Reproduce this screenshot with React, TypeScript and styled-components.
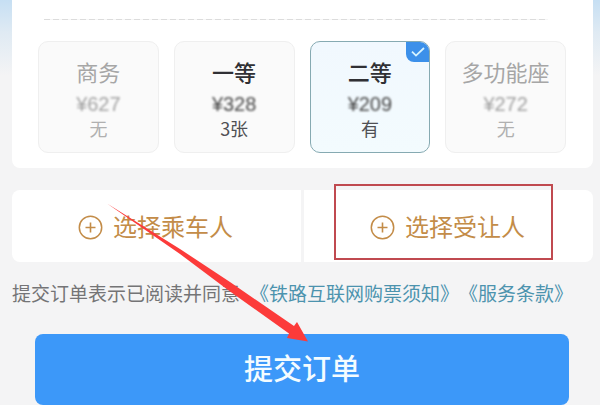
import React, { useState } from "react";
import styled, { createGlobalStyle } from "styled-components";

const GlobalStyle = createGlobalStyle`
  *, *::before, *::after { box-sizing: border-box; }
  body {
    margin: 0;
    background: #f4f4f5;
    font-family: "Noto Sans CJK SC", sans-serif;
  }
  button { font-family: inherit; cursor: pointer; }
  button:disabled { cursor: default; }
`;

const Page = styled.main`
  position: relative;
  overflow: hidden;
  padding: 0 7px 0 12px;
  background: linear-gradient(180deg, #c6dff3 0, #dfeaf3 32px, #f4f4f5 76px);
`;

const SeatCard = styled.section`
  padding: 19px 27px 15px 26px;
  background: #fff;
  border-radius: 0 0 8px 8px;
`;

const Divider = styled.hr`
  height: 1px;
  margin: 0 18px 21px 6px;
  border: 0;
  background: repeating-linear-gradient(90deg, #dcdcdc 0 6px, #f6f6f6 6px 9px);
`;

const SeatGrid = styled.div`
  display: grid;
  grid-template-columns: repeat(4, 1fr);
  gap: 15px;
`;

const Seat = styled.button<{ $selected: boolean }>`
  position: relative;
  display: flex;
  flex-direction: column;
  align-items: center;
  height: 112px;
  padding: 12px 0 0;
  overflow: hidden;
  color: #303034;
  background: ${(p) =>
    p.$selected ? "linear-gradient(180deg, #f1f8fe, #f3fbfe)" : "#fafafa"};
  border: ${(p) => (p.$selected ? "1px solid #86aab2" : "1px solid #efefef")};
  border-radius: 10px;

  &:disabled { color: #a6a6a6; }
`;

const SeatName = styled.span`
  font-size: 22px;
  font-weight: 500;
  line-height: 34px;

  ${Seat}:disabled & { font-weight: 400; }
`;

const Price = styled.span`
  margin-top: 4px;
  font-family: "Liberation Sans", sans-serif;
  font-size: 20px;
  line-height: 24px;
  color: #484848;
  filter: blur(1px);

  ${Seat}:disabled & { color: #a2a2a2; }
`;

const Stock = styled.span`
  font-size: 18px;
  line-height: 24px;
  color: #505054;

  ${Seat}:disabled & { color: #b0b0b0; }
`;

const Tick = styled.span`
  position: absolute;
  top: -1px;
  right: -1px;
  display: flex;
  align-items: center;
  justify-content: center;
  width: 24px;
  height: 21px;
  background: #3c90ea;
  border-radius: 0 10px 0 8px;
`;

const PeopleRow = styled.section`
  display: grid;
  grid-template-columns: 1fr 1fr;
  gap: 3px;
  margin-top: 22px;
`;

const PersonCell = styled.div`
  position: relative;
  background: #fff;

  &:first-child { border-radius: 8px 0 0 8px; }
  &:last-child { border-radius: 0 8px 8px 0; }
`;

const PersonButton = styled.button`
  display: flex;
  align-items: center;
  justify-content: center;
  gap: 10px;
  width: 100%;
  height: 72px;
  padding: 2px 2px 0 0;
  font-size: 24px;
  line-height: 32px;
  color: #c38c48;
  background: transparent;
  border: 0;
`;

const PersonLabel = styled.span`
  padding-bottom: 3px;
`;

const Highlight = styled.div`
  position: absolute;
  inset: -6px 40px 2px 30px;
  border: 2px solid #c04a50;
  pointer-events: none;
`;

const Agreement = styled.p`
  display: flex;
  margin: 17px 0 0;
  font-size: 19px;
  line-height: 28px;
  white-space: nowrap;
  color: #747476;
`;

const Links = styled.span`
  display: flex;
  margin-left: 10px;
`;

const TermsLink = styled.a`
  color: #4c93ae;
  text-decoration: none;
`;

const Submit = styled.button`
  display: block;
  width: calc(100% - 47px);
  height: 71px;
  margin: 27px 24px 0 23px;
  padding: 0 0 6px;
  font-size: 29px;
  font-weight: 500;
  color: #f4fcff;
  background: #3c98f9;
  border: 0;
  border-radius: 8px;
`;

const Arrow = styled.svg`
  position: absolute;
  left: 106px;
  top: 203px;
  pointer-events: none;
`;

const seats = [
  { name: "商务", price: "¥627", stock: "无", soldOut: true },
  { name: "一等", price: "¥328", stock: "3张", soldOut: false },
  { name: "二等", price: "¥209", stock: "有", soldOut: false },
  { name: "多功能座", price: "¥272", stock: "无", soldOut: true },
];

const PlusCircle = () => (
  <svg width="25" height="25" viewBox="0 0 25 25" fill="none" stroke="currentColor" aria-hidden="true">
    <circle cx="12.5" cy="12.5" r="11.2" strokeWidth="1.5" />
    <path d="M12.5 7.5v10M7.5 12.5h10" strokeWidth="1.6" />
  </svg>
);

export default function App() {
  const [selected, setSelected] = useState("二等");

  return (
    <>
      <GlobalStyle />
      <Page>
        <SeatCard>
          <Divider />
          <SeatGrid>
            {seats.map((seat) => (
              <Seat
                key={seat.name}
                type="button"
                disabled={seat.soldOut}
                aria-pressed={selected === seat.name}
                $selected={selected === seat.name}
                onClick={() => setSelected(seat.name)}
              >
                <SeatName>{seat.name}</SeatName>
                <Price>{seat.price}</Price>
                <Stock>{seat.stock}</Stock>
                {selected === seat.name && (
                  <Tick>
                    <svg width="14" height="10" viewBox="0 0 14 10" fill="none" aria-hidden="true">
                      <path d="M1 4.6 5 8.6 13 1" stroke="#d5f3ff" strokeWidth="1.8" />
                    </svg>
                  </Tick>
                )}
              </Seat>
            ))}
          </SeatGrid>
        </SeatCard>

        <PeopleRow>
          <PersonCell>
            <PersonButton type="button">
              <PlusCircle />
              <PersonLabel>选择乘车人</PersonLabel>
            </PersonButton>
          </PersonCell>
          <PersonCell>
            <PersonButton type="button">
              <PlusCircle />
              <PersonLabel>选择受让人</PersonLabel>
            </PersonButton>
            <Highlight />
          </PersonCell>
        </PeopleRow>

        <Agreement>
          提交订单表示已阅读并同意
          <Links>
            <TermsLink href="#rules">《铁路互联网购票须知》</TermsLink>
            <TermsLink href="#terms">《服务条款》</TermsLink>
          </Links>
        </Agreement>

        <Submit type="submit">提交订单</Submit>

        <Arrow width="204" height="140" viewBox="0 0 204 140" aria-hidden="true">
          <path d="M1 .5 74 46 124 79 188 123 191 119 202 138.500 181 135 183 130.500 122 87 74 51Z" fill="#fc3b3a" />
        </Arrow>
      </Page>
    </>
  );
}
